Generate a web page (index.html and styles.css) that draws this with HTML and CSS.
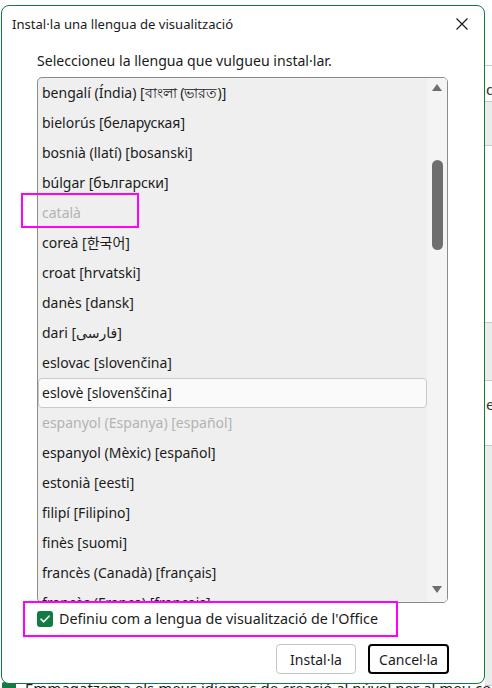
FILE: index.html
```html
<!DOCTYPE html>
<html lang="ca">
<head>
<meta charset="utf-8">
<title>Instal·la una llengua de visualització</title>
<link rel="stylesheet" href="styles.css">
</head>
<body>
<div class="page">
  <div class="page-head">
    <span class="page-accent"></span>
    <h1 class="page-title">Definiu les preferències de llengua de l'Office</h1>
  </div>
  <div class="page-main">
    <div class="side-table">
      <div class="side-row side-blank" style="height:62px"></div>
      <div class="side-row side-text" style="height:36px">d</div>
      <div class="side-row side-grey" style="height:44px"></div>
      <div class="side-row side-blank" style="height:177px"></div>
      <div class="side-row side-grey" style="height:58px"></div>
      <div class="side-row side-text" style="height:65px">e</div>
      <div class="side-row side-grey" style="height:240px"></div>
    </div>
  </div>
  <div class="page-foot">
    <span class="foot-check"></span>
    <span class="foot-text">Emmagatzema els meus idiomes de creació al núvol per al meu compte</span>
  </div>
</div>

<div class="dialog" role="dialog" aria-labelledby="dlg-title">
  <div class="titlebar">
    <span id="dlg-title" class="title">Instal·la una llengua de visualització</span>
    <button class="close" aria-label="Tanca">
      <svg width="12" height="12" viewBox="0 0 12 12"><path d="M0.5 0.5 L11.5 11.5 M11.5 0.5 L0.5 11.5" stroke="#1b1b1b" stroke-width="1.2" fill="none"/></svg>
    </button>
  </div>
  <div class="body">
    <p class="prompt">Seleccioneu la llengua que vulgueu instal·lar.</p>
    <div class="listbox">
      <ul class="items">
        <li>bengalí (Índia) [বাংলা (ভারত)]</li>
        <li>bielorús [беларуская]</li>
        <li>bosnià (llatí) [bosanski]</li>
        <li>búlgar [български]</li>
        <li class="disabled">català</li>
        <li>coreà [한국어]</li>
        <li>croat [hrvatski]</li>
        <li>danès [dansk]</li>
        <li>dari [فارسی]</li>
        <li>eslovac [slovenčina]</li>
        <li class="hover">eslovè [slovenščina]</li>
        <li class="disabled">espanyol (Espanya) [español]</li>
        <li>espanyol (Mèxic) [español]</li>
        <li>estonià [eesti]</li>
        <li>filipí [Filipino]</li>
        <li>finès [suomi]</li>
        <li>francès (Canadà) [français]</li>
        <li>francès (França) [français]</li>
      </ul>
      <div class="scrollbar">
        <span class="arrow up"></span>
        <span class="thumb"></span>
        <span class="arrow down"></span>
      </div>
    </div>
    <label class="check-row">
      <span class="checkbox">
        <svg width="10" height="8" viewBox="0 0 10 8"><path d="M1 4.2 L3.7 6.8 L9 1.2" stroke="#fff" stroke-width="1.6" fill="none" stroke-linecap="round" stroke-linejoin="round"/></svg>
      </span>
      <span>Definiu com a lengua de visualització de l'Office</span>
    </label>
    <div class="buttons">
      <button class="btn">Instal·la</button>
      <button class="btn focused">Cancel·la</button>
    </div>
  </div>
  <span class="mark mark-catala"></span>
  <span class="mark mark-check"></span>
</div>
</body>
</html>
```

FILE: styles.css
```css
* {
  box-sizing: border-box;
  /* keep "l·l" as two letters with a middle dot */
  font-feature-settings: "locl" 0;
}

html, body {
  margin: 0;
  padding: 0;
}

body {
  width: 492px;
  height: 688px;
  overflow: hidden;
  position: relative;
  background: #ffffff;
  font-family: "Noto Sans", "DejaVu Sans", "Noto Sans CJK KR", sans-serif;
  color: #1b1b1b;
}

/* window behind the dialog */
.page {
  height: 688px;
  display: flex;
  flex-direction: column;
  overflow: hidden;
}

.page-head {
  height: 5px;
  overflow: hidden;
  display: flex;
  align-items: flex-start;
  padding-left: 11px;
}

.page-accent {
  width: 2px;
  height: 5px;
  background: #3f7fc8;
  flex: none;
}

.page-title {
  margin: -13px 0 0 14px;
  font-size: 16px;
  line-height: normal;
  font-weight: 400;
  color: #262626;
  white-space: nowrap;
}

.page-main {
  flex: 1;
  display: flex;
  justify-content: flex-end;
}

.side-table {
  width: 7px;
  display: flex;
  flex-direction: column;
  padding-top: 4px;
}

.side-row {
  border-bottom: 1px solid #c8c8c8;
  font-size: 15px;
  line-height: 20px;
  display: flex;
  padding-left: 1px;
  color: #333;
  overflow: hidden;
}

.side-text {
  align-items: flex-start;
  padding-top: 13px;
}

.side-grey { background: #ececec; }

.page-foot {
  height: 4px;
  display: flex;
  align-items: flex-start;
  gap: 9px;
  padding-left: 2px;
  font-size: 15px;
  color: #1b1b1b;
  white-space: nowrap;
}

.foot-check {
  width: 14px;
  height: 14px;
  background: #107c41;
  border-radius: 2px;
  flex: none;
  margin-top: -4px;
}

.foot-text {
  margin-top: -8px;
  line-height: normal;
}

/* dialog */
.dialog {
  position: absolute;
  left: 1px;
  top: 5px;
  width: 484px;
  height: 679px;
  background: #ffffff;
  border: 1px solid #107c41;
  border-radius: 8px;
  display: flex;
  flex-direction: column;
}

.titlebar {
  height: 36px;
  display: flex;
  align-items: center;
  justify-content: space-between;
  padding: 0 10px 0 10px;
}

.title {
  font-size: 13.1px;
  color: #1b1b1b;
}

.close {
  width: 24px;
  height: 24px;
  border: 0;
  background: none;
  padding: 0;
  display: flex;
  align-items: center;
  justify-content: center;
}

.body {
  padding: 0 35px 0 35px;
  display: flex;
  flex-direction: column;
}

.prompt {
  margin: 9px 0 6px;
  font-size: 14.1px;
  line-height: 20px;
}

.listbox {
  height: 526px;
  border: 1px solid #8c8c8c;
  border-radius: 5px;
  background: #efefef;
  display: flex;
  overflow: hidden;
  margin-right: 1px;
}

.items {
  list-style: none;
  margin: 0;
  padding: 0;
  flex: 1;
  overflow: hidden;
}

.items li {
  height: 30px;
  line-height: 28px;
  padding-left: 3px;
  font-size: 14px;
  white-space: nowrap;
  border: 1px solid transparent;
  border-radius: 4px;
}

.items li.disabled { color: #b3b3b3; }

.items li.hover {
  background: #fafafa;
  border-color: #c9c9c9;
}

.scrollbar {
  width: 20px;
  background: #f4f4f4;
  display: flex;
  flex-direction: column;
  align-items: center;
}

.arrow {
  width: 0;
  height: 0;
  border-left: 5px solid transparent;
  border-right: 5px solid transparent;
}

.arrow.up {
  border-bottom: 7px solid #6e6e6e;
  margin-top: 6px;
}

.thumb {
  width: 11px;
  height: 90px;
  background: #6e6e6e;
  border-radius: 6px;
  margin-top: 69px;
}

.arrow.down {
  border-top: 7px solid #6e6e6e;
  margin-top: auto;
  margin-bottom: 9px;
}

.check-row {
  display: flex;
  align-items: center;
  gap: 6px;
  margin-top: 7px;
  font-size: 14.3px;
  line-height: 18px;
}

.checkbox {
  width: 16px;
  height: 16px;
  border-radius: 3px;
  background: #107c41;
  display: flex;
  align-items: center;
  justify-content: center;
  flex: none;
}

.buttons {
  display: flex;
  justify-content: flex-end;
  gap: 12px;
  margin-top: 16px;
}

.btn {
  height: 30px;
  width: 80px;
  padding: 0;
  font-family: inherit;
  font-size: 14px;
  color: #1b1b1b;
  background: #ffffff;
  border: 1px solid #c4c4c4;
  border-radius: 4px;
}

.btn.focused {
  border: 2px solid #000000;
  width: 81px;
}

/* pink callout frames */
.mark {
  position: absolute;
  border: 2px solid #ff00ff;
  pointer-events: none;
}

.mark-catala {
  left: 19px;
  top: 187px;
  width: 118px;
  height: 35px;
}

.mark-check {
  left: 21px;
  top: 595px;
  width: 375px;
  height: 36px;
}
```
